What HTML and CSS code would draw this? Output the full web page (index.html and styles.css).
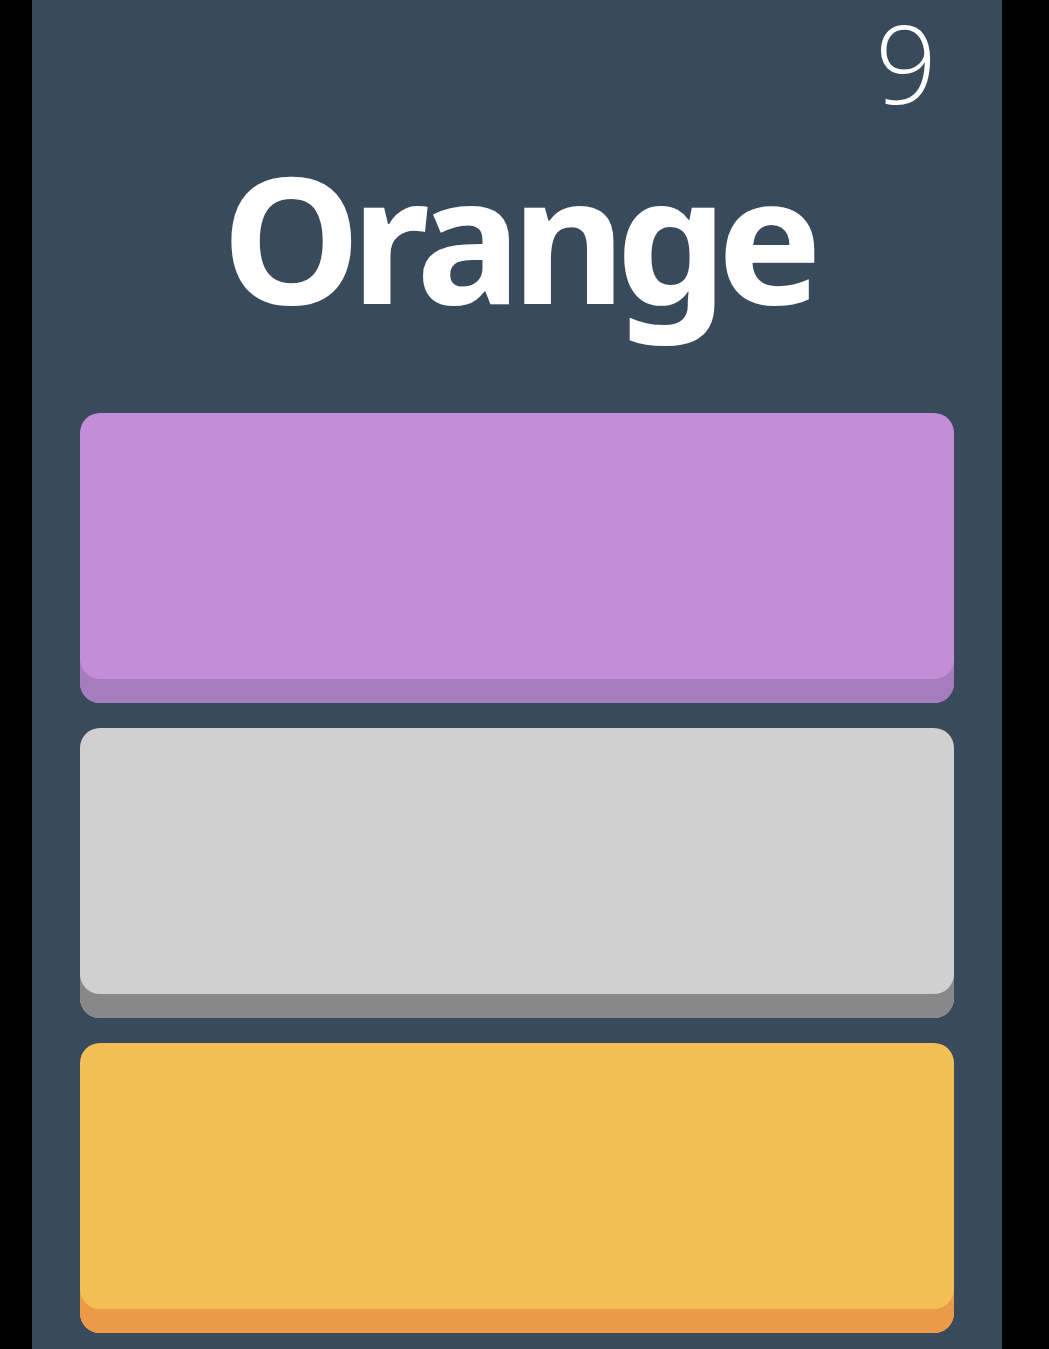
FILE: index.html
```html
<!DOCTYPE html>
<html lang="en">
<head>
    <meta charset="UTF-8">
    <title>Color Game</title>
    <link rel="stylesheet" href="styles.css">
</head>
<body>
    <div class="game">
        <div class="score">9</div>
        <h1 class="word">Orange</h1>

        <!-- answer buttons -->
        <div class="choices">
            <button class="choice purple"></button>
            <button class="choice gray"></button>
            <button class="choice yellow"></button>
        </div>
    </div>
</body>
</html>
```

FILE: styles.css
```css
html, body {
    margin: 0;
    height: 100%;
    background: #000;
}
body {
    font-family: "Noto Sans", "Open Sans", sans-serif;
    color: #fff;
}
.game {
    width: 970px;
    height: 1349px;
    margin-left: 32px;
    background: #394a5d;
    overflow: hidden;
}
.score {
    padding: 9px 65px 0 0;
    text-align: right;
    font-family: "Open Sans", sans-serif;
    font-size: 108px;
    font-weight: 300;
    line-height: 108px;
}
.word {
    margin: 19px 0 0;
    text-align: center;
    font-size: 176px;
    font-weight: 700;
    letter-spacing: -10px;
    line-height: 200px;
    height: 200px;
}
.choices {
    display: flex;
    flex-direction: column;
    gap: 25px;
    padding: 0 48px;
    margin-top: 77px;
}
.choice {
    display: block;
    height: 290px;
    border: none;
    border-radius: 20px;
    padding: 0;
    cursor: pointer;
}
.purple {
    background: #c38ed6;
    box-shadow: inset 0 -24px 0 #a57cbd;
}
.gray {
    background: #d0d0d0;
    box-shadow: inset 0 -24px 0 #888888;
}
.yellow {
    background: #f2bf55;
    box-shadow: inset 0 -24px 0 #eb9a48;
}
```
